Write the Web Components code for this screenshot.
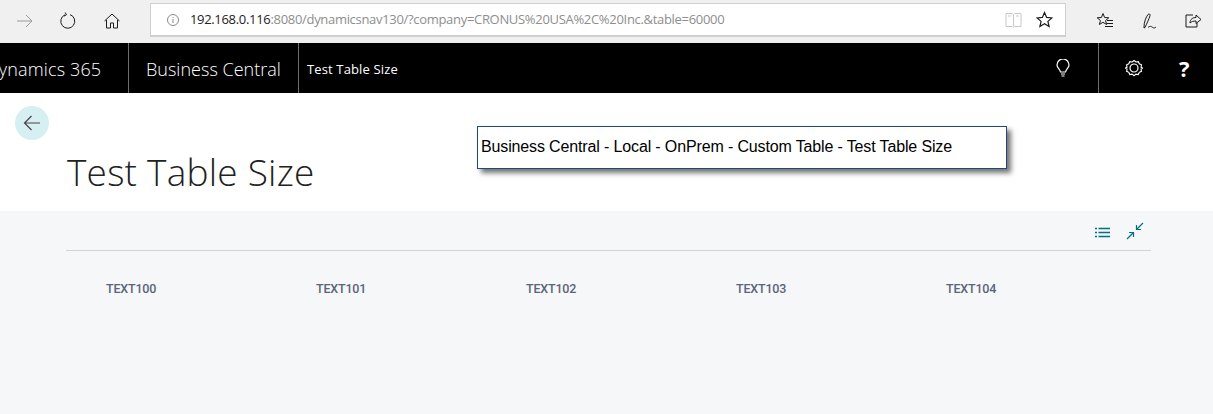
<!DOCTYPE html>
<html><head><meta charset="utf-8"><style>
html,body{margin:0;padding:0;width:1213px;height:414px;overflow:hidden;background:#f5f7f9}
body{position:relative;font-family:"Open Sans",sans-serif}
</style></head><body>
<browser-chrome></browser-chrome>
<app-bar></app-bar>
<page-header></page-header>
<list-area></list-area>
<call-out>Business Central - Local - OnPrem - Custom Table - Test Table Size</call-out>
<script>
function def(name,html){customElements.define(name,class extends HTMLElement{constructor(){super();this.attachShadow({mode:'open'}).innerHTML=html}})}
def('browser-chrome',`<style>
:host{display:flex;align-items:flex-start;height:43px;box-sizing:border-box;background:#f0f0f0;color:#000}
svg{display:block;fill:none;stroke:#1a1a1a;stroke-width:1}
.nav{display:flex;width:150px;height:43px;box-sizing:border-box;padding:12px 0 0 16px;gap:25px}
.addr{width:917px;height:34px;margin-top:3px;box-sizing:border-box;background:#fff;border:1px solid #cfcfcf;border-width:1px 1px 2px 1px;display:flex;align-items:center;padding-left:15px;font:13px/1 "Open Sans",sans-serif;color:#8e8e8e;letter-spacing:-.31px}
.addr b{font-weight:400;color:#222}
.addr span.u{margin-left:10px;white-space:nowrap}
.sp{flex:1}
.tools{display:flex;width:147px;box-sizing:border-box;padding:12px 0 0 30px;gap:28px}
</style>
<div class="nav">
<svg width="18" height="18" viewBox="0 0 18 18" style="stroke:#9a9a9a"><path d="M1 9h15M10 3l6 6-6 6"/></svg>
<svg width="18" height="18" viewBox="0 0 18 18"><path d="M6 2.800A7 7 0 1 0 11 2.600M6.200 .5l1.200 2.300-2.400 1.300"/></svg>
<svg width="18" height="18" viewBox="0 0 18 18" style="margin-left:1px"><path d="M1.500 9 9 2l7.500 7M3.500 8v8h4v-5h3v5h4V8"/></svg>
</div>
<div class="addr">
<svg width="14" height="14" viewBox="0 0 14 14" style="stroke:#8a8a8a"><circle cx="7" cy="7" r="5.500"/><path d="M7 6v4M7 4v1"/></svg>
<span class="u"><b>192.168.0.116</b>:8080/dynamicsnav130/?company=CRONUS%20USA%2C%20Inc.&amp;table=60000</span>
<span class="sp"></span>
<svg width="17" height="16" viewBox="0 0 17 16" style="stroke:#c8c8c8;margin-right:14px"><path d="M1 1.500h6.500l1 1 1-1H16v13H9.500l-1 1-1-1H1zM8.500 2.500v12M3 4h3M11 4h3"/></svg>
<svg width="17" height="17" viewBox="0 0 17 17" style="margin-right:12px;stroke-width:1.200"><path d="M8.500 1.500 10.600 6.400l5.300.5-4 3.500 1.200 5.200-4.600-2.800-4.600 2.800 1.200-5.200-4-3.500 5.300-.5z"/></svg>
</div>
<div class="tools">
<svg width="18" height="18" viewBox="0 0 18 18"><path d="M7 1.500 8.600 5.500l4.200.3-3.200 2.700 1 4-3.600-2.200-3.600 2.200 1-4L1.200 5.800l4.200-.3zM11 8.500h6M11 11.500h6M9 14.500h8"/></svg>
<svg width="16" height="18" viewBox="0 0 16 18"><path d="M2 15C2 10 4 5 6 2.500c1-1 2.500-.5 2 1.200C7 7 5 11 3 15.500L2 16zM6 15.500c2-2 3.500-1 5 .2 1 .6 2 .2 3-.7"/></svg>
<svg width="18" height="18" viewBox="0 0 18 18" style="margin-left:-2px"><path d="M9 3H2v12h11v-4M6 11c0-4 3-5.500 6-5.500V3l5 4.500-5 4V9c-2.500 0-4.500.5-6 2z"/></svg>
</div>`);
def('app-bar',`<style>
:host{display:flex;align-items:stretch;height:50px;background:#000;color:#fff;overflow:hidden;font-family:"Open Sans",sans-serif;white-space:nowrap}
.cell{display:flex;align-items:center;box-sizing:border-box;border-right:1px solid #6e6e6e;padding-top:1px}
.d{width:129px;font-size:18px;font-weight:300;overflow:hidden;letter-spacing:.14px}
.d span{margin-left:-14px}
.b{width:170px;padding-left:17px;font-size:18px;font-weight:300;letter-spacing:.02px}
.t{flex:1;padding-left:8px;font-size:13px;font-weight:400;letter-spacing:.14px;border:0}
.i{display:flex;align-items:center;padding-right:28px}
.r{width:115px;border-left:1px solid #6e6e6e;display:flex;align-items:center;padding-left:26px;gap:36px;box-sizing:border-box}
svg{display:block;fill:none;stroke:#fff;stroke-width:1.200}
.q{font:700 22px/1 "Open Sans",sans-serif}
</style>
<div class="cell d"><span>Dynamics 365</span></div>
<div class="cell b">Business Central</div>
<div class="cell t">Test Table Size</div>
<div class="i"><svg width="14" height="18" viewBox="0 0 14 18"><path d="M4.500 13C4 10 1 9 1 6a6 6 0 0 1 12 0c0 3-3 4-3.500 7zM5 15h4M5.500 17h3"/></svg></div>
<div class="r">
<svg width="18" height="18" viewBox="0 0 18 18"><path d="M9 1l2 1.600 2.500-.4 1 2.300 2.300 1-.4 2.500L18 9l-1.600 1 .4 2.500-2.300 1-1 2.300-2.500-.4L9 17l-2-1.600-2.500.4-1-2.300-2.300-1 .4-2.500L0 9l1.600-1-.4-2.500 2.300-1 1-2.300 2.500.4z" transform="translate(.5 .5) scale(.95)"/><circle cx="9" cy="9" r="4"/></svg>
<span class="q">?</span>
</div>`);
def('page-header',`<style>
:host{display:block;height:118px;box-sizing:border-box;background:#fff;padding:13px 0 0 15px;position:relative}
.back{width:34px;height:34px;border-radius:50%;background:#d6eff3;display:flex;align-items:center;justify-content:center}
svg{display:block;fill:none;stroke:#444;stroke-width:1.200}
h1{margin:7px 0 0 52px;font:300 37px/50px "Open Sans",sans-serif;color:#212121;letter-spacing:.22px}
</style>
<div class="back"><svg width="18" height="16" viewBox="0 0 18 16"><path d="M17 8H1.500M8.500 1 1.500 8l7 7"/></svg></div>
<h1>Test Table Size</h1>`);
def('list-area',`<style>
:host{display:block;height:203px;box-sizing:border-box;background:#f5f7f9;padding:0 62px 0 66px}
.bar{height:40px;box-sizing:border-box;border-bottom:1px solid #d4d4d4;display:flex;justify-content:flex-end;align-items:flex-start;gap:16px;padding:11px 7px 0 0}
svg{display:block;fill:none;stroke:#00717d;stroke-width:1.200}
.list{stroke-width:1.500}
.cols{display:grid;grid-template-columns:repeat(5,210px);padding:30px 0 0 40px;font:500 12.500px/16px Roboto,sans-serif;color:#5c6478;letter-spacing:-.2px}
</style>
<div class="bar">
<svg class="list" width="15" height="16" viewBox="0 0 15 16" style="margin-top:4px"><path d="M0 2.500h2M3.500 2.500H15M0 6.500h2M3.500 6.500H15M0 10.500h2M3.500 10.500H15"/></svg>
<svg width="18" height="18" viewBox="0 0 18 18"><path d="M17 1 10.500 7.500M10.500 3v4.500H15M1 17l6.500-6.500M7.500 15v-4.500H3"/></svg>
</div>
<div class="cols"><span>TEXT100</span><span>TEXT101</span><span>TEXT102</span><span>TEXT103</span><span>TEXT104</span></div>`);
def('call-out',`<style>
:host{position:absolute;left:477px;top:126px;width:530px;height:43px;box-sizing:border-box;background:#fff;border:1px solid #1f497d;box-shadow:4px 4px 5px rgba(0,0,0,.55);display:flex;align-items:center;padding:0 0 2px 3px;font:16px "Liberation Sans",Arial,sans-serif;letter-spacing:-.14px;color:#000;white-space:nowrap}
</style><slot></slot>`);
</script>
</body></html>
